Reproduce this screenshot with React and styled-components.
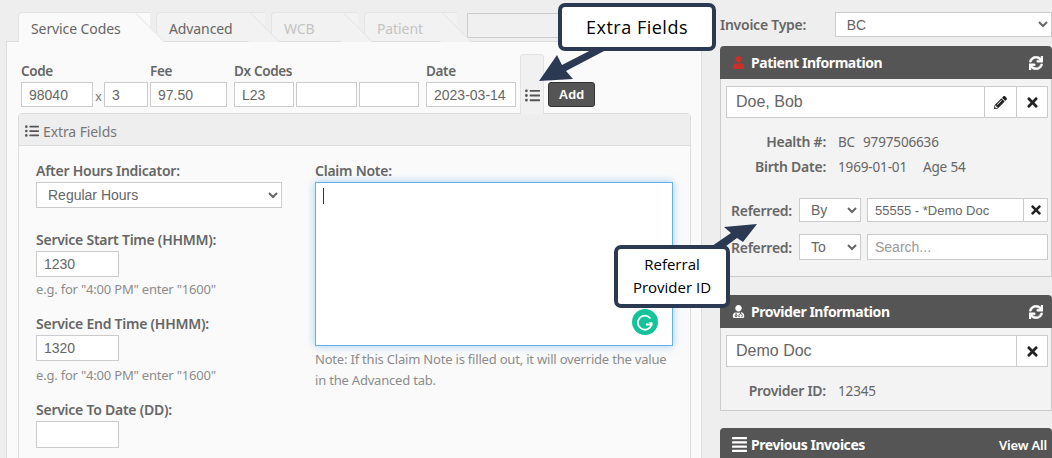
import React from 'react';
import styled, { createGlobalStyle } from 'styled-components';
import { FaListUl, FaUser, FaSync, FaPencilAlt, FaTimes, FaUserMd, FaAlignJustify } from 'react-icons/fa';

const GlobalStyle = createGlobalStyle`
  html, body {
    margin: 0;
    padding: 0;
    background: #eeeeee;
  }
  * {
    box-sizing: border-box;
  }
`;

const sans = '"Noto Sans", "Open Sans", sans-serif';
const arial = '"Liberation Sans", Arial, sans-serif';

const Page = styled.div`
  position: relative;
  display: flex;
  width: 1052px;
  height: 458px;
  overflow: hidden;
  padding: 12px 0 0 6px;
  font-family: ${sans};
  color: #666;
`;

const LeftColumn = styled.div`
  width: 696px;
  flex: none;
`;

const RightColumn = styled.div`
  width: 332px;
  margin-left: 18px;
  flex: none;
`;

const TabBar = styled.div`
  display: flex;
  gap: 6px;
  height: 30px;
  padding-left: 12px;
  margin-bottom: -1px;
  position: relative;
  z-index: 1;
`;

const Tab = styled.div`
  position: relative;
  width: ${p => p.$w}px;
  z-index: ${p => p.$z};
  padding: 7px 0 0 12px;
  font-size: 14px;
  letter-spacing: -0.1px;
  line-height: 18px;
  color: ${p => (p.$disabled ? '#c4c4c4' : '#666')};
  background: ${p => (p.$active ? '#fafafa' : '#f2f2f2')};
  border: 1px solid ${p => (p.$active ? '#e2e2e2' : '#e4e4e4')};
  border-width: 1px 0 0 1px;
  border-bottom: ${p => (p.$active ? 'none' : '1px solid #ddd')};
  border-radius: 4px 0 0 0;

  &::after {
    content: '';
    position: absolute;
    top: -1px;
    bottom: ${p => (p.$active ? '0' : '-1px')};
    right: 0;
    width: 30px;
    background: inherit;
    border-right: 1px solid #e2e2e2;
    border-top: 1px solid #e4e4e4;
    transform: skewX(45deg);
    z-index: -1;
  }
`;

const EmptySearch = styled.div`
  width: 112px;
  height: 25px;
  margin: 1px 0 0 4px;
  border: 1px solid #ccc;
  background: #f0f0f0;
`;

const MainPanel = styled.div`
  height: 420px;
  padding: 12px 10px 0 11px;
  background: #fafafa;
  border: 1px solid #ddd;
`;

const CodeRow = styled.div`
  display: flex;
  height: 59px;
  padding-left: 3px;
`;

const Field = styled.div`
  display: flex;
  flex-direction: column;
  justify-content: flex-end;
  padding-bottom: 6px;
  margin-left: ${p => p.$ml || 0}px;
`;

const FieldLabel = styled.label`
  font-size: 13.5px;
  font-weight: 600;
  letter-spacing: -0.35px;
  line-height: 18px;
  margin-bottom: 2px;
  color: #666;
`;

const InputLine = styled.div`
  display: flex;
  align-items: center;
  gap: ${p => p.$gap || 0}px;
`;

const TextBox = styled.input`
  width: ${p => p.$w}px;
  height: ${p => p.$h || 25}px;
  padding: 0 7px;
  font-family: ${arial};
  font-size: 14px;
  color: #666;
  background: #fff;
  border: 1px solid #ccc;
  border-radius: 0;
  outline: none;
  margin-left: ${p => p.$ml || 0}px;

  &::placeholder {
    color: #999;
  }
`;

const Times = styled.span`
  width: 11px;
  text-align: center;
  font-size: 13px;
  padding-top: 4px;
  color: #777;
  font-family: ${arial};
`;

const ListTab = styled.div`
  width: 24px;
  margin-left: 4px;
  margin-bottom: -1px;
  position: relative;
  z-index: 1;
  display: flex;
  align-items: flex-end;
  justify-content: center;
  padding-bottom: 11px;
  color: #555;
  font-size: 15px;
  background: #f1f1f1;
  border: 1px solid #e2e2e2;
  border-bottom: none;
  border-radius: 4px 4px 0 0;
`;

const AddButton = styled.button`
  align-self: flex-end;
  width: 47px;
  height: 25px;
  margin: 0 0 6px 4px;
  padding: 0;
  font-family: ${arial};
  font-size: 13px;
  font-weight: 700;
  color: #fff;
  background: #555;
  border: 1px solid #333;
  border-radius: 3px;
`;

const ExtraPanel = styled.div`
  width: 673px;
  height: 400px;
  border: 1px solid #ddd;
  border-radius: 4px 4px 0 0;
`;

const ExtraHeader = styled.div`
  display: flex;
  align-items: center;
  gap: 4px;
  height: 32px;
  padding: 3px 0 0 6px;
  font-size: 14px;
  letter-spacing: -0.1px;
  color: #777;
  background: #eeeeee;
  border-bottom: 1px solid #ddd;

  svg {
    color: #555;
    font-size: 14px;
  }
`;

const ExtraBody = styled.div`
  display: flex;
  padding: 16px 0 0 17px;
`;

const FormColumn = styled.div`
  width: ${p => p.$w}px;
  flex: none;
  margin-right: ${p => p.$mr || 0}px;
`;

const FormLabel = styled.label`
  display: block;
  font-size: 14px;
  font-weight: 600;
  letter-spacing: -0.25px;
  line-height: 18px;
  height: 20px;
  margin-top: ${p => p.$mt || 0}px;
  color: #666;
`;

const Help = styled.div`
  font-size: 13px;
  letter-spacing: -0.2px;
  line-height: 21px;
  margin-top: ${p => p.$mt || 0}px;
  color: #8c8c8c;
`;

const Picker = styled.select`
  width: ${p => p.$w}px;
  height: ${p => p.$h || 26}px;
  padding: 0 0 0 ${p => p.$pl || 7}px;
  font-family: ${arial};
  font-size: 14px;
  color: #666;
  background-color: #fff;
  border: 1px solid #ccc;
  border-radius: 0;
  outline: none;
`;

const NoteWrap = styled.div`
  position: relative;
  width: 358px;
  height: 164px;
  background: #fff;
  border: 1px solid #66afe9;
  box-shadow: 0 0 8px rgba(102, 175, 233, 0.6);
`;

const Caret = styled.div`
  position: absolute;
  left: 7px;
  top: 5px;
  width: 1px;
  height: 16px;
  background: #333;
`;

const GrammarlyBadge = styled.svg`
  position: absolute;
  right: 14px;
  bottom: 10px;
  width: 26px;
  height: 26px;
`;

const InvoiceRow = styled.div`
  display: flex;
  align-items: center;
  height: 25px;
  margin-bottom: 9px;
`;

const InvoiceLabel = styled.label`
  width: 115px;
  font-size: 14px;
  font-weight: 600;
  letter-spacing: -0.25px;
  color: #666;
`;

const InfoPanel = styled.section`
  margin-bottom: ${p => p.$mb || 0}px;
  border-radius: 4px 4px 0 0;
`;

const PanelHeader = styled.header`
  display: flex;
  align-items: center;
  height: 33px;
  padding: 0 9px 0 12px;
  font-size: 14px;
  font-weight: 700;
  letter-spacing: -0.45px;
  color: #fff;
  background: #555;
  border-radius: 4px 4px 0 0;
`;

const HeaderIcon = styled.span`
  display: flex;
  width: ${p => p.$w || 19}px;
  font-size: ${p => p.$size || 13}px;
  margin-left: ${p => p.$ml || 0}px;
  color: ${p => p.$color || '#fff'};
`;

const HeaderTitle = styled.span`
  flex: 1;
`;

const HeaderAction = styled.span`
  display: flex;
  font-size: ${p => p.$size || 14}px;
  font-weight: 600;
  letter-spacing: -0.2px;
  margin-right: ${p => p.$mr || 0}px;

  svg {
    stroke: currentColor;
    stroke-width: 20px;
  }
`;

const PanelBody = styled.div`
  padding: 7px 3px ${p => p.$pb}px 5px;
  background: #f3f3f3;
  border: 1px solid #ccc;
  border-top: none;
`;

const InputGroup = styled.div`
  display: flex;
  height: ${p => p.$h}px;
  flex: ${p => (p.$fill ? 1 : 'none')};
  background: #fff;
  border: 1px solid #ccc;
`;

const GroupText = styled.div`
  flex: 1;
  display: flex;
  align-items: center;
  padding-left: ${p => p.$pl}px;
  font-family: ${arial};
  font-size: ${p => p.$size}px;
  color: #666;
`;

const GroupButton = styled.div`
  display: flex;
  align-items: center;
  justify-content: center;
  width: ${p => p.$w}px;
  font-size: ${p => p.$size || 15}px;
  color: #222;
  border-left: 1px solid #ccc;
`;

const InfoRows = styled.div`
  margin-top: 11px;
`;

const InfoRow = styled.div`
  display: flex;
  align-items: center;
  height: 25px;
  font-size: 14px;
`;

const InfoLabel = styled.span`
  width: 100px;
  margin-right: 12px;
  text-align: right;
  font-weight: 600;
  letter-spacing: -0.25px;
  color: #666;
`;

const InfoValue = styled.span`
  margin-right: ${p => p.$mr || 0}px;
  font-size: 13.5px;
  letter-spacing: -0.15px;
  color: #666;
`;

const ReferredRow = styled.div`
  display: flex;
  align-items: center;
  height: ${p => p.$h}px;
  gap: 6px;
  margin-top: ${p => p.$mt}px;
`;

const ReferredLabel = styled.span`
  width: 66px;
  margin-right: 1px;
  text-align: right;
  font-size: 14px;
  font-weight: 600;
  letter-spacing: -0.25px;
  white-space: nowrap;
  color: #666;
`;

const Callout = styled.div`
  position: absolute;
  display: flex;
  align-items: center;
  justify-content: center;
  text-align: center;
  left: ${p => p.$x}px;
  top: ${p => p.$y}px;
  width: ${p => p.$w}px;
  height: ${p => p.$h}px;
  padding-bottom: ${p => p.$pb || 0}px;
  font-family: "Open Sans", sans-serif;
  font-size: ${p => p.$size}px;
  letter-spacing: ${p => p.$ls || 0}px;
  line-height: 23px;
  color: #000;
  background: #fff;
  border: 4px solid #2b3a52;
  border-radius: 7px;
  z-index: 5;
`;

const ArrowLayer = styled.svg`
  position: absolute;
  left: 0;
  top: 0;
  z-index: 4;
  pointer-events: none;
`;

const App = () => (
  <Page>
    <GlobalStyle />
    <LeftColumn>
      <TabBar>
        <Tab $w={132} $z={4} $active>Service Codes</Tab>
        <Tab $w={109} $z={3}>Advanced</Tab>
        <Tab $w={87} $z={2} $disabled>WCB</Tab>
        <Tab $w={93} $z={1} $disabled>Patient</Tab>
        <EmptySearch />
      </TabBar>
      <MainPanel>
        <CodeRow>
          <Field>
            <FieldLabel>Code</FieldLabel>
            <InputLine>
              <TextBox $w={72} defaultValue="98040" />
              <Times>x</Times>
              <TextBox $w={44} defaultValue="3" />
            </InputLine>
          </Field>
          <Field $ml={2}>
            <FieldLabel>Fee</FieldLabel>
            <TextBox $w={77} defaultValue="97.50" />
          </Field>
          <Field $ml={7}>
            <FieldLabel>Dx Codes</FieldLabel>
            <InputLine $gap={2}>
              <TextBox $w={60} defaultValue="L23" />
              <TextBox $w={61} />
              <TextBox $w={60} />
            </InputLine>
          </Field>
          <Field $ml={7}>
            <FieldLabel>Date</FieldLabel>
            <TextBox $w={90} defaultValue="2023-03-14" />
          </Field>
          <ListTab><FaListUl /></ListTab>
          <AddButton>Add</AddButton>
        </CodeRow>
        <ExtraPanel>
          <ExtraHeader><FaListUl />Extra Fields</ExtraHeader>
          <ExtraBody>
            <FormColumn $w={246} $mr={33}>
              <FormLabel>After Hours Indicator:</FormLabel>
              <Picker $w={246} $pl={7} defaultValue="Regular Hours">
                <option>Regular Hours</option>
              </Picker>
              <FormLabel $mt={23}>Service Start Time (HHMM):</FormLabel>
              <TextBox $w={83} $h={26} defaultValue="1230" />
              <Help $mt={2}>e.g. for "4:00 PM" enter "1600"</Help>
              <FormLabel $mt={15}>Service End Time (HHMM):</FormLabel>
              <TextBox $w={83} $h={26} defaultValue="1320" />
              <Help $mt={4}>e.g. for "4:00 PM" enter "1600"</Help>
              <FormLabel $mt={15}>Service To Date (DD):</FormLabel>
              <TextBox $w={83} $h={27} />
            </FormColumn>
            <FormColumn $w={358}>
              <FormLabel>Claim Note:</FormLabel>
              <NoteWrap>
                <Caret />
                <GrammarlyBadge viewBox="0 0 26 26">
                  <circle cx="13" cy="13" r="13" fill="#15c39a" />
                  <path d="M18.5 9.5 A7 7 0 1 0 19.6 15.5 L14 15.5" fill="none" stroke="#fff" strokeWidth="1.8" />
                  <path d="M16.5 13.2 L20.4 13.2 L20.4 17 Z" fill="#fff" />
                </GrammarlyBadge>
              </NoteWrap>
              <Help $mt={3}>Note: If this Claim Note is filled out, it will override the value in the Advanced tab.</Help>
            </FormColumn>
          </ExtraBody>
        </ExtraPanel>
      </MainPanel>
    </LeftColumn>

    <RightColumn>
      <InvoiceRow>
        <InvoiceLabel>Invoice Type:</InvoiceLabel>
        <Picker $w={218} $h={25} $pl={7} defaultValue="BC">
          <option>BC</option>
        </Picker>
      </InvoiceRow>

      <InfoPanel $mb={18}>
        <PanelHeader>
          <HeaderIcon $color="#c9302c"><FaUser /></HeaderIcon>
          <HeaderTitle>Patient Information</HeaderTitle>
          <HeaderAction><FaSync /></HeaderAction>
        </PanelHeader>
        <PanelBody $pb={16}>
          <InputGroup $h={32}>
            <GroupText $pl={9} $size={16}>Doe, Bob</GroupText>
            <GroupButton $w={32} $size={13}><FaPencilAlt /></GroupButton>
            <GroupButton $w={31}><FaTimes /></GroupButton>
          </InputGroup>
          <InfoRows>
            <InfoRow>
              <InfoLabel>Health #:</InfoLabel>
              <InfoValue $mr={8}>BC</InfoValue>
              <InfoValue>9797506636</InfoValue>
            </InfoRow>
            <InfoRow>
              <InfoLabel>Birth Date:</InfoLabel>
              <InfoValue $mr={16}>1969-01-01</InfoValue>
              <InfoValue>Age 54</InfoValue>
            </InfoRow>
          </InfoRows>
          <ReferredRow $h={24} $mt={19}>
            <ReferredLabel>Referred:</ReferredLabel>
            <Picker $w={62} $h={24} $pl={7} defaultValue="By"><option>By</option></Picker>
            <InputGroup $h={24} $fill>
              <GroupText $pl={7} $size={13}>55555 - *Demo Doc</GroupText>
              <GroupButton $w={24} $size={14}><FaTimes /></GroupButton>
            </InputGroup>
          </ReferredRow>
          <ReferredRow $h={26} $mt={12}>
            <ReferredLabel>Referred:</ReferredLabel>
            <Picker $w={62} $h={26} $pl={7} defaultValue="To"><option>To</option></Picker>
            <TextBox $w={181} $h={26} placeholder="Search..." />
          </ReferredRow>
        </PanelBody>
      </InfoPanel>

      <InfoPanel $mb={17}>
        <PanelHeader>
          <HeaderIcon><FaUserMd /></HeaderIcon>
          <HeaderTitle>Provider Information</HeaderTitle>
          <HeaderAction><FaSync /></HeaderAction>
        </PanelHeader>
        <PanelBody $pb={7}>
          <InputGroup $h={32}>
            <GroupText $pl={9} $size={16}>Demo Doc</GroupText>
            <GroupButton $w={31}><FaTimes /></GroupButton>
          </InputGroup>
          <InfoRows>
            <InfoRow>
              <InfoLabel>Provider ID:</InfoLabel>
              <InfoValue>12345</InfoValue>
            </InfoRow>
          </InfoRows>
        </PanelBody>
      </InfoPanel>

      <InfoPanel>
        <PanelHeader>
          <HeaderIcon $size={17} $ml={-1} $w={20}><FaAlignJustify /></HeaderIcon>
          <HeaderTitle>Previous Invoices</HeaderTitle>
          <HeaderAction $size={13} $mr={-4}>View All</HeaderAction>
        </PanelHeader>
      </InfoPanel>
    </RightColumn>

    <ArrowLayer width="1052" height="458" viewBox="0 0 1052 458">
      <polygon fill="#2b3a52" points="539,81 557,55 562,65 597,47 606,47 606,50 566,71 573,79" />
      <polygon fill="#2b3a52" points="757,224 724,227 731,233 712,246 718,252 737,238 743,242" />
    </ArrowLayer>
    <Callout $x={558} $y={3} $w={158} $h={48} $size={18} $ls={0.5}>Extra Fields</Callout>
    <Callout $x={614} $y={245} $w={116} $h={63} $size={15} $pb={2}>Referral<br />Provider ID</Callout>
  </Page>
);

export default App;
